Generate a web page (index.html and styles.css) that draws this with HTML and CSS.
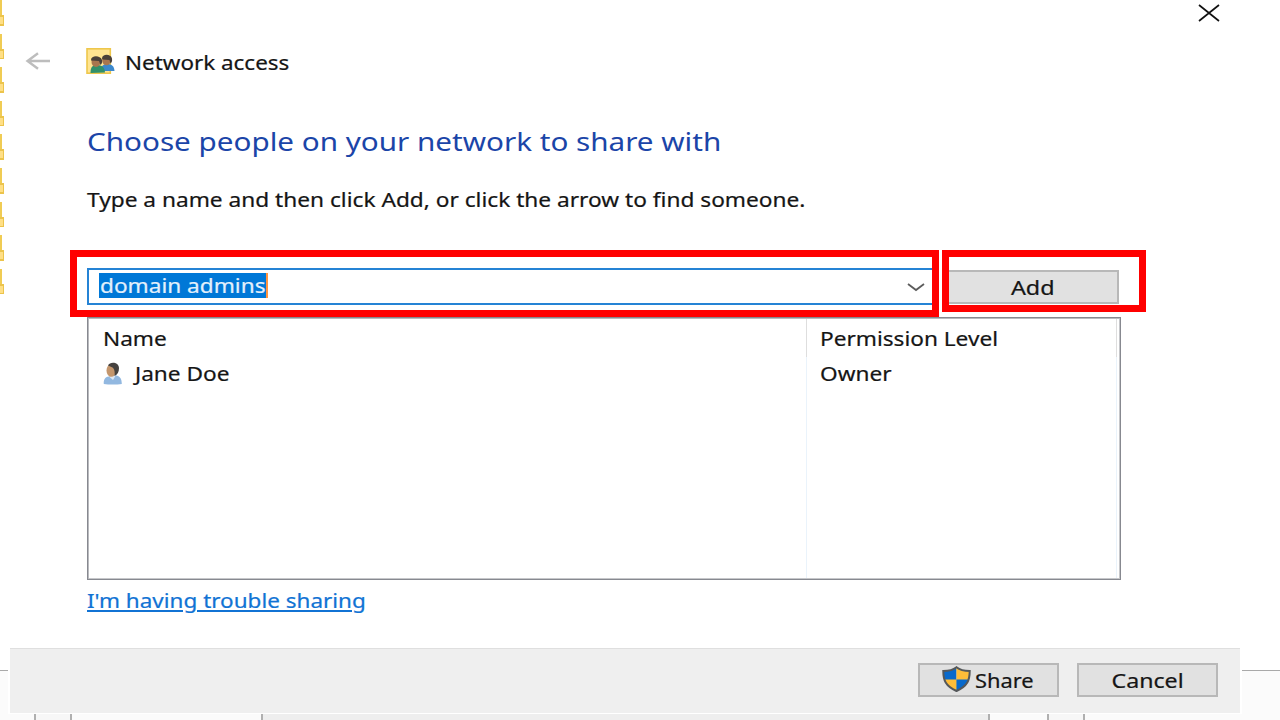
FILE: index.html
```html
<!DOCTYPE html>
<html lang="en">
<head>
<meta charset="utf-8">
<title>Network access</title>
<link rel="stylesheet" href="styles.css">
</head>
<body>
<div class="desktop">
  <div class="folders">
    <i class="folder"></i><i class="folder"></i><i class="folder"></i><i class="folder"></i><i class="folder"></i><i class="folder"></i><i class="folder"></i><i class="folder"></i><i class="folder"></i>
  </div>
  <div class="behind">
    <div class="cells"><i class="c1"></i><i class="c2"></i><i class="c3"></i><i class="c4"></i><i class="c5"></i><i class="c6"></i><i class="c7"></i></div>
  </div>
  <main class="dialog">
    <header class="titlebar">
      <svg class="back" width="26" height="20" viewBox="0 0 26 20"><path d="M25 10H2.500M13 2.200L2.500 10l10.500 7.800" fill="none" stroke="#bdbdbd" stroke-width="2.400"/></svg>
      <svg class="app-icon" width="29" height="27" viewBox="0 0 29 27">
        <rect x="1" y=".8" width="23.300" height="24.400" fill="#ffe491" stroke="#eec74c" stroke-width="1.600"/>
        <path d="M15 23c0-5 2-7 6-7 5 0 7 2 7.500 7z" fill="#3b88cc"/>
        <ellipse cx="20.500" cy="12.500" rx="4.300" ry="4.800" fill="#a9764e"/>
        <path d="M16 10.500c0-5 9-5 10 0 .5 3-.5 4-1.500 5l-1-3.500-7-.5z" fill="#4a4039"/>
        <path d="M4.500 25c0-6 2-8 6.500-8 5 0 7.500 2 8 7.500z" fill="#32906a"/>
        <ellipse cx="10" cy="14" rx="4.500" ry="5" fill="#a9764e"/>
        <path d="M5 12c0-5 9.500-5 11 0 .5 3-.5 4-1.500 5l-1.500-4-8-.5z" fill="#4a4039"/>
      </svg>
      <span class="t title">Network access</span>
      <svg class="close" width="22" height="18" viewBox="0 0 22 18"><path d="M1 1l20 16M21 1L1 17" stroke="#111" stroke-width="1.700"/></svg>
    </header>
    <section class="content">
      <h1 class="t heading">Choose people on your network to share with</h1>
      <p class="t hint">Type a name and then click Add, or click the arrow to find someone.</p>
      <div class="entry">
        <div class="combo">
          <span class="selection"><span class="t typed">domain admins</span></span>
          <svg class="chevron" width="18" height="10" viewBox="0 0 18 10"><path d="M1 2l8 6 8-6" fill="none" stroke="#5c5c5c" stroke-width="1.800"/></svg>
        </div>
        <div class="button add"><span class="t add-text">Add</span></div>
      </div>
      <div class="list">
        <div class="col names">
          <div class="cell head"><span class="t name">Name</span></div>
          <div class="cell person">
            <svg width="20" height="23" viewBox="0 0 20 23">
              <path d="M.8 22c-.3-4 1-7 5-7.500l6-1.500c5 1 7 3 7 9-5 .8-13 .8-18 0z" fill="#92b8e0"/>
              <path d="M6 14.500l4 3.500 3-5z" fill="#dfe9f4"/>
              <ellipse cx="8.300" cy="8.500" rx="4.800" ry="6.300" fill="#c4966c"/>
              <path d="M5 3.500C7-1 16 0 16 6c0 4-1.500 6.500-4.500 8 .5-4 0-7-2-8.500-1.500-1-3-1-4.500-2z" fill="#45423f"/>
            </svg>
            <span class="t jane">Jane Doe</span>
          </div>
        </div>
        <div class="col levels">
          <div class="cell head"><span class="t perm">Permission Level</span></div>
          <div class="cell"><span class="t owner">Owner</span></div>
        </div>
      </div>
      <a class="t link">I'm having trouble sharing</a>
    </section>
    <footer class="footer">
      <div class="button share-button">
        <svg class="shield" width="29" height="26" viewBox="0 0 29 26">
          <path d="M14.500 1C11 4 6 5 1.500 5c0 9 2 15 13 20z" fill="#0869cb"/>
          <path d="M14.500 1C18 4 23 5 27.500 5c0 9-2 15-13 20z" fill="#ffbd38"/>
          <path d="M2 13.500h12.500V25C7 22 3.500 18 2 13.500z" fill="#ffbd38"/>
          <path d="M27 13.500H14.500V25C22 22 25.500 18 27 13.500z" fill="#0869cb"/>
          <path d="M14.500 1.200C11 4 6 5 1.300 5c0 9 2 15 13.200 20 11.200-5 13.200-11 13.200-20C23 5 18 4 14.500 1.200z" fill="none" stroke="#55585a" stroke-width="2"/>
        </svg>
        <span class="t share">Share</span>
      </div>
      <div class="button"><span class="t cancel">Cancel</span></div>
    </footer>
  </main>
  <div class="mark mark-combo"></div>
  <div class="mark mark-add"></div>
</div>
</body>
</html>
```
FILE: styles.css
```css
* { box-sizing: border-box; }
body { margin: 0; }
.desktop { position: relative; width: 1280px; height: 720px; overflow: hidden; background: #fff; font-family: "Noto Sans", sans-serif; font-size: 19px; line-height: 24px; color: #151515; }

/* windows partly hidden by the dialog */
.folders { position: absolute; left: 0; top: 0; width: 5px; }
.folder { display: block; height: 25.6px; margin-bottom: 8px; width: 4px; background: linear-gradient(#ffdf86, #ffdf86) left 17px / 3px 7px no-repeat, linear-gradient(#ecc44c, #ecc44c) left 15px / 4px 11px no-repeat, linear-gradient(#f0cc54, #f0cc54) left top / 2px 16px no-repeat; }
.behind { position: absolute; left: 0; right: 0; top: 670px; height: 50px; border-top: 1px solid #a9a9a9; background: #fbfbfb; padding-top: 43px; }
.cells { display: flex; height: 7px; }
.cells i { border-right: 2px solid #b0b0b0; }
.c1 { width: 36px; }
.c2 { width: 36px; background: #f7f7f7; }
.c3 { width: 191px; }
.c4 { width: 727px; background: #eee; }
.c5 { width: 59px; }
.c6 { width: 36px; background: #f7f7f7; }
.cells .c7 { flex: 1; border: 0; }

.dialog { position: relative; display: flex; flex-direction: column; width: 1234px; height: 714px; margin-left: 8px; padding: 0 2px; background: #fff; }
.t { display: inline-block; white-space: nowrap; transform-origin: 0 50%; transform: scaleX(1.190); -webkit-text-stroke: .2px currentColor; }
.titlebar { display: flex; align-items: flex-start; height: 123px; padding: 0 20px 0 15px; }
.back { margin-top: 51px; }
.app-icon { margin: 48px 10px 0 35px; }
.title { margin-top: 50.5px; transform: scaleX(1.180); }
.close { margin: 4px 0 0 auto; }
.content { display: flex; flex-direction: column; align-items: flex-start; height: 525px; padding-left: 77px; }
.heading { margin: 1px 0 0; font-size: 26px; line-height: 34px; font-weight: 400; color: #1b45a8; transform: scaleX(1.140); -webkit-text-stroke: 0; }
.hint { margin: 30px 0 0; transform: scaleX(1.193); }
.entry { display: flex; align-items: center; height: 37px; margin-top: 56px; }
.combo { display: flex; align-items: center; justify-content: space-between; width: 852px; height: 37px; padding: 0 12px 0 10px; border: 2px solid #2583d5; }
.selection { width: 169px; height: 25px; margin-top: -2px; padding: 1px 0 0 1px; background: #0078d7; border-right: 2px solid #ff9440; color: #e3f0fc; }
.button { display: flex; align-items: center; justify-content: center; width: 141px; height: 34px; padding-top: 2px; border: 2px solid #b8b8b8; background: #e1e1e1; }
.button .t { transform-origin: 50% 50%; }
.add { width: 173px; margin-left: 7px; }
.button .add-text { transform: scaleX(1.230); }
.button .cancel { transform: scaleX(1.220); }
.list { display: flex; width: 1034px; height: 263px; margin-top: 12px; padding: 1px 3px; border: 1px solid #878990; box-shadow: inset 1px 1px #b9babe, inset -1px -1px #c6c7ca; }
.col { display: flex; flex-direction: column; border-right: 1px solid #eaf3fb; }
.names { width: 716px; padding-left: 12px; }
.levels { width: 310px; padding-left: 13px; }
.cell { height: 35px; display: flex; align-items: center; }
.head { height: 38px; margin-right: -1px; padding-top: 1px; border-right: 1px solid #dedede; }
.person { gap: 12px; }
.person svg { margin-top: -2px; }
.jane, .owner { margin-top: -2px; }
.link { margin-top: 9px; color: #1173d4; text-decoration: underline; text-decoration-thickness: 1.500px; text-underline-offset: 2px; transform: scaleX(1.183); }
.footer { display: flex; justify-content: flex-end; gap: 18px; height: 65px; padding: 14px 22px 0 0; border-top: 1px solid #dfdfdf; background: #efefef; }
.share-button { justify-content: flex-start; padding-left: 22px; }
.share-button .share { transform-origin: 0 50%; transform: scaleX(1.150); }
.shield { margin: -4px 4px 0 0; }
.mark { position: absolute; border: 7px solid #f00; }
.mark-combo { left: 70px; top: 250px; width: 869px; height: 67px; }
.mark-add { left: 942px; top: 250px; width: 204px; height: 62px; }
```
